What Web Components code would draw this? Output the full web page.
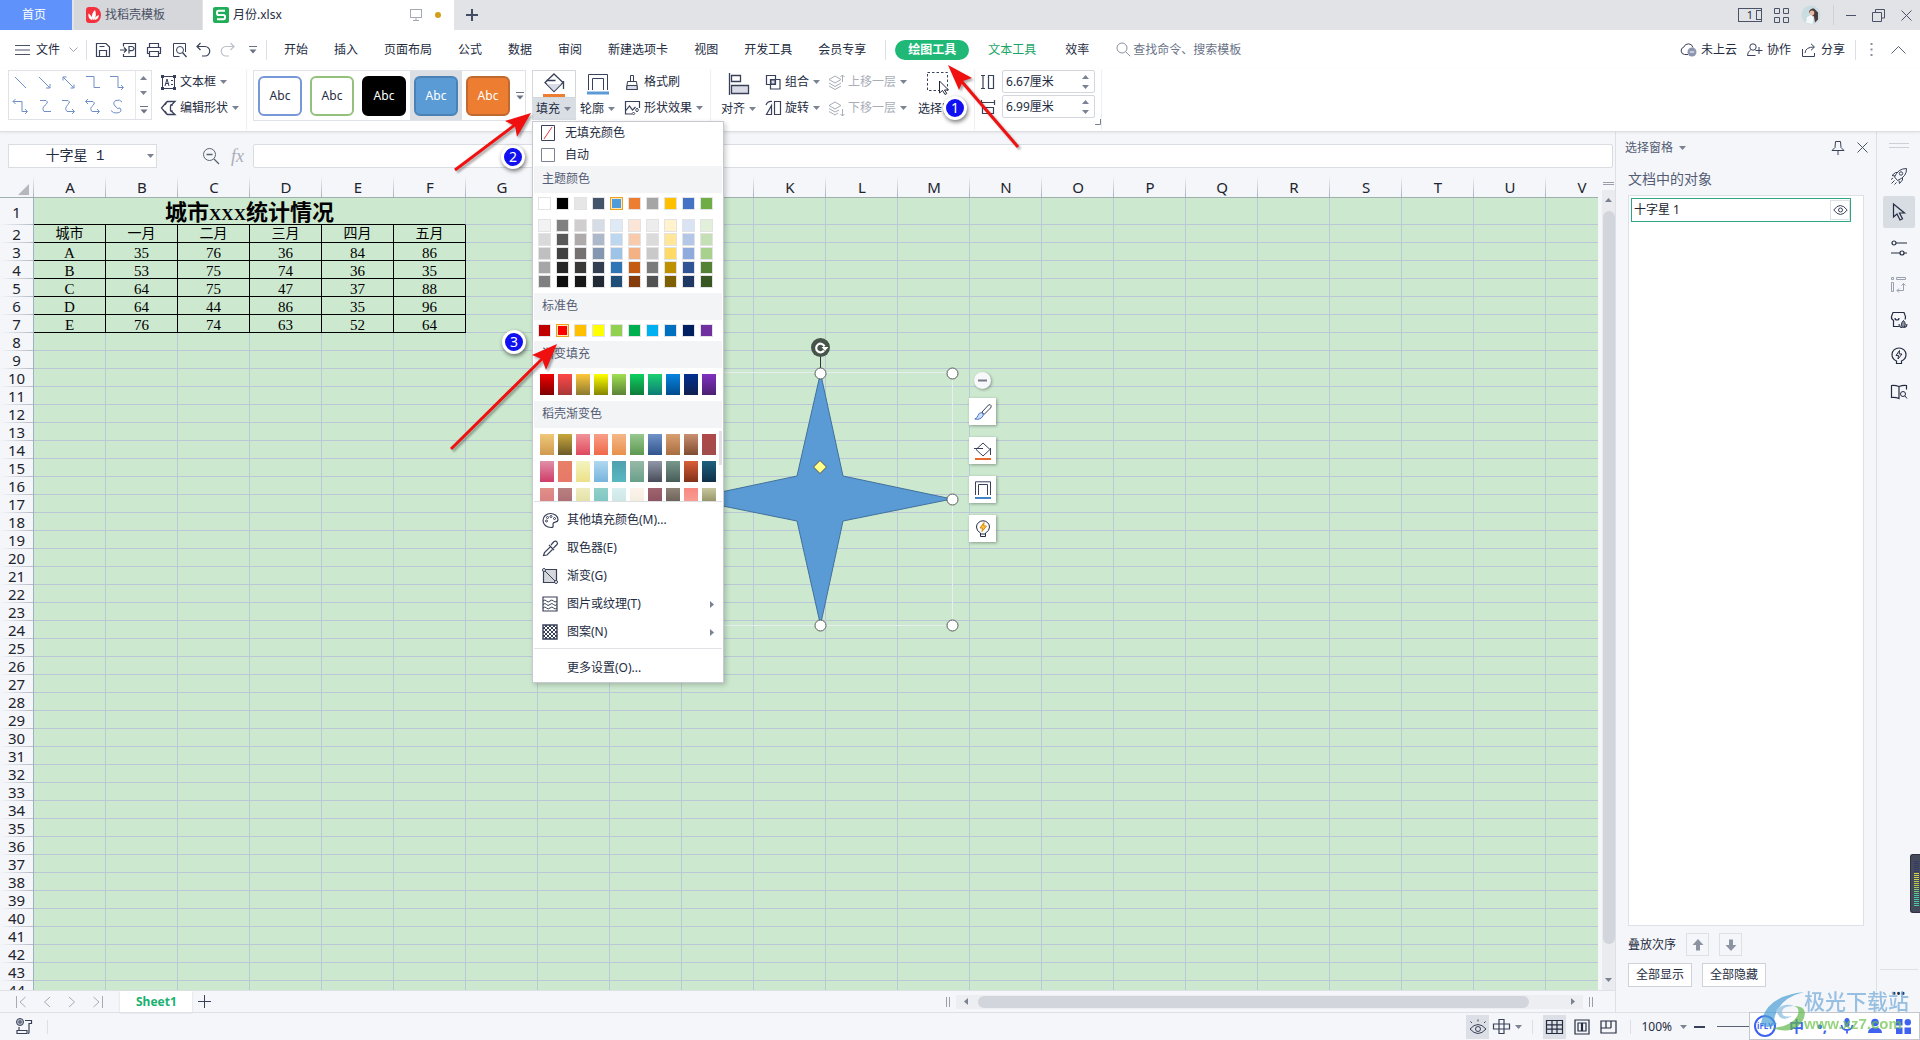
<!DOCTYPE html>
<html lang="zh-CN">
<head>
<meta charset="utf-8">
<title>月份.xlsx</title>
<style>
html,body{height:100%}
body{margin:0;overflow:hidden;font:12px/16px "Noto Sans","Noto Sans CJK SC",sans-serif;color:#242c42;background:#f5f6f9}
</style>
</head>
<body>
<wps-app></wps-app>
<script>
const BASE = `
*{box-sizing:border-box}
button{font:inherit;color:inherit;background:none;border:0;padding:0;margin:0;display:inline-flex;align-items:center;white-space:nowrap}
input{font:inherit;color:inherit;margin:0;outline:0}
a{color:inherit;text-decoration:none}
.sep{width:1px;background:#dcdfe4;flex:none}
.grow{flex:1}
`;
function define(tag, css, html, setup) {
  const tpl = document.createElement('template');
  customElements.define(tag, class extends HTMLElement {
    connectedCallback() {
      if (this.shadowRoot) return;
      const root = this.attachShadow({mode: 'open'});
      tpl.innerHTML = '<style>' + BASE + css + '</style>' + (typeof html === 'function' ? html(this) : html);
      root.append(tpl.content.cloneNode(true));
      if (setup) setup(this, root);
    }
  });
}
const DARK = 'stroke="#39415a"';
/* name: [width, height, markup] */
const ICONS = {
  caret: [7,4,'<path d="M0 0h7L3.500 4z" fill="#7b8292" stroke="none"/>'],
  caretup: [7,4,'<path d="M0 4h7L3.500 0z" fill="#7b8292" stroke="none"/>'],
  caretright: [4,7,'<path d="M0 0v7L4 3.500z" fill="#7b8292" stroke="none"/>'],
  caretleft: [4,7,'<path d="M4 0v7L0 3.500z" fill="#7b8292" stroke="none"/>'],
  more: [8,8,'<path d="M0 .5h8" stroke="#6b7283"/><path d="M0.500 3.500h7L4 7.500z" fill="#6b7283" stroke="none"/>'],
  docer: [15,16,'<path d="M0 3Q0 0 3 0h5a7 8 0 0 1 0 16H3Q0 16 0 13z" fill="#f5313d" stroke="none"/><path d="M7.500 13C5 11 5.500 6 9 3c1.500 4 1 8-1.500 10zM6.500 13C3 12.500 2 9.500 2.500 6.500 5 8 6.500 10 6.500 13zM8.500 13c3.500-.5 4.500-3 4.300-5-2.300.8-3.800 2.500-4.300 5z" fill="#fff" stroke="none"/>'],
  xls: [16,16,'<rect width="16" height="16" rx="2" fill="#1fae57" stroke="none"/><path d="M12 3.800H5.500Q4 3.800 4 5.300v.9Q4 8 5.500 8h5Q12 8 12 9.600v1Q12 12.200 10.500 12.200H4" stroke="#fff" stroke-width="2"/>'],
  monitor: [14,14,'<rect x="1.500" y="1.500" width="11" height="8" stroke="#a5a9b3"/><path d="M7 9.500v3M4 12.500h6" stroke="#a5a9b3"/>'],
  plus: [12,12,'<path d="M6 0v12M0 6h12" stroke="#444c63" stroke-width="2"/>'],
  plusthin: [13,13,'<path d="M6.500 0v13M0 6.500h13" stroke="#39415a"/>'],
  grid4: [15,15,'<path d="M.5.5h5v5h-5zM9.500.5h5v5h-5zM.5 9.500h5v5h-5zM9.500 9.500h5v5h-5z" stroke="#4a5268"/>'],
  avatar: [20,20,'<circle cx="10" cy="10" r="9.500" fill="#c9dcdf" stroke="none"/><path d="M8 7q1-4 5-3.500l4 4v7l-3 3-1-6-3-2z" fill="#4a3a3c" stroke="none"/><circle cx="11" cy="8" r="2.400" fill="#e9b9a2" stroke="none"/><path d="M5 18l1-6 4-2 2.500 3-1 6z" fill="#f3f7fa" stroke="none"/>'],
  min: [10,10,'<path d="M0 5.500h10" stroke="#4a5268"/>'],
  restore: [13,13,'<path d="M3.500 3.500v-3h9v8.500h-3M.5 3.500h9v9h-9z" stroke="#4a5268"/>'],
  close: [11,11,'<path d="M.5.5l10 10M10.500.5l-10 10" stroke="#4a5268"/>'],
  burger: [15,12,'<path d="M0 1.500h15M0 6h15M0 10.500h15" stroke="#4a5268"/>'],
  chevdown: [9,6,'<path d="M.5.5l4 4 4-4" stroke="#a0a5b1"/>'],
  chevup: [15,8,'<path d="M.5 7.500l7-7 7 7" stroke="#5a6276"/>'],
  save: [16,16,'<path d="M1.500 1.500h9.500l3.500 3.500v9.500h-13zM4.500 14.500V8.500h7v6M4.500 4.500h5" '+DARK+' stroke-width="1.200"/>'],
  export: [17,16,'<path d="M3.500 4.500V1.500h12v13h-12V12M0 8h6M4 5.500L6.500 8 4 10.500M9 11.500V4.500h3q2 .5 2 2t-2 2.200H9" '+DARK+' stroke-width="1.200"/>'],
  print: [16,16,'<path d="M3.500 5.500v-4h9v4M3.500 11.500h-2v-6h13v6h-2M3.500 9.500h9v5h-9z" '+DARK+' stroke-width="1.200"/>'],
  preview: [16,16,'<path d="M14.500 10V1.500h-12v13h6" '+DARK+'/><circle cx="9" cy="8" r="3.500" '+DARK+'/><path d="M11.500 10.500l4 4.500" '+DARK+' stroke-width="1.300"/>'],
  undo: [15,16,'<path d="M1.500 4.500H9a4.500 4.500 0 0 1 0 9.500H6M4.500 1L1 4.500 4.500 8" '+DARK+' stroke-width="1.200"/>'],
  redo: [15,16,'<path d="M13.500 4.500H6A4.500 4.500 0 0 0 6 14h3M10.500 1L14 4.500 10.500 8" stroke="#bcc0c9" stroke-width="1.200"/>'],
  search: [15,15,'<circle cx="6" cy="6" r="5" stroke="#8a90a0"/><path d="M9.700 9.700l4.500 4.500" stroke="#8a90a0"/>'],
  cloud: [17,15,'<path d="M8 12.500H4.500a3.800 3.800 0 0 1-.7-7.400A4.800 4.800 0 0 1 13 5.500" '+DARK+'/><circle cx="12" cy="10" r="4.500" fill="#8d95b0" stroke="none"/><path d="M9.800 10h4.400" stroke="#fff"/>'],
  coop: [16,14,'<circle cx="6" cy="4" r="3.200" '+DARK+'/><path d="M3.500 7.200Q.5 8.500.5 12.500h8M12 4v7M8.500 7.500H15.500" '+DARK+'/>'],
  share: [16,14,'<path d="M1.500 6v7.500h12V10M4 10q.5-6 9-6M10 .8L13.500 4 10 7.300" '+DARK+'/>'],
  dots: [3,13,'<path d="M.5 0h2v2h-2zM.5 5.500h2v2h-2zM.5 11h2v2h-2z" fill="#8a90a0" stroke="none"/>'],
  textbox: [17,17,'<path d="M2.500 2.500h12v12h-12z" '+DARK+'/><path d="M1 1h3v3H1zM13 1h3v3h-3zM1 13h3v3H1zM13 13h3v3h-3z" fill="#39415a" stroke="none"/><path d="M5 12l2-7 2 7M5.500 9.500h3M11 6.500h2M11 10.500h2" '+DARK+'/>'],
  editshape: [17,16,'<path d="M7 1.500L1.500 8 7 14.500M7 1.500h8L10.500 6v4.500l4.500 4H7M5 5l2-3M5 11l2 3" '+DARK+' stroke-width="1.300"/><path d="M10 5h3M10 11h3" '+DARK+'/>'],
  bucket: [24,22,'<path d="M12 2l9 8.500-9 9-9-9z" fill="#fff" '+DARK+' stroke-width="1.300"/><path d="M5 12h14l-7 7z" fill="#d9dbe6" stroke="none"/><path d="M4.500 8.500h9M21.500 9v8" '+DARK+' stroke-width="1.300"/>'],
  outline: [22,22,'<path d="M1.500 17V1.500h19V17M5.500 17V5.500h11V17" '+DARK+' stroke-width="1"/><path d="M0 20h22" stroke="#5b9bd5" stroke-width="3"/>'],
  brush: [16,17,'<path d="M6.500 1.500h3v6h-3zM3.500 7.500h9l1 8h-11z" fill="#fff" '+DARK+'/><path d="M3 11.500h10l.3 4H2.700z" fill="#d9dbe6" '+DARK+'/>'],
  effect: [17,16,'<path d="M8 14H1.500V1.500h14V8M1.500 11l4-5 3 4 3-3" '+DARK+' stroke-width="1.200"/><path d="M13 8l1.500 2L13 12l-1.500-2zM9.500 12l1.300 1.500-1.300 1.500L8.200 13.500z" '+DARK+'/>'],
  align: [22,22,'<path d="M1.500 0v22" '+DARK+' stroke-width="1.300"/><path d="M3.500 2.500h9v6h-9z" '+DARK+' stroke-width="1.300"/><path d="M3.500 12.500h17v8h-17z" fill="#d9dbe6" '+DARK+' stroke-width="1.300"/>'],
  group: [17,17,'<path d="M1.500 1.500h9v9h-9z" fill="none" '+DARK+' stroke-width="1.200"/><path d="M5.500 5.500h9.500v9.500H5.500z" '+DARK+' stroke-width="1.200"/><path d="M6 6h4v4H6z" fill="#d9dbe6" '+DARK+'/>'],
  rotate: [17,16,'<path d="M9.500 1.500h6v13h-6zM6.500 14.500h-5l5-9zM1 5q1.500-4 6-3.500" '+DARK+' stroke-width="1.200"/>'],
  layerup: [17,17,'<path d="M7 2l6 3.500-6 3.500-6-3.500zM1 9l6 3.500L13 9M1 12l6 3.500 6-3.500M14.500 8V1M12.500 3l2-2 2 2" stroke="#a9adb7"/>'],
  layerdown: [17,17,'<path d="M7 2l6 3.500-6 3.500-6-3.500zM1 8.500L7 12l4-2M1 11.500L7 15l3-2M14.500 9v7M12.500 14l2 2 2-2" stroke="#a9adb7"/>'],
  selpane: [26,24,'<path d="M.5.5h20v18H.5z" '+DARK+' stroke-dasharray="2.500 2"/><path d="M12.500 9v12l3-2.500 2.500 4 1.800-1L17.500 18h4z" fill="#fff" stroke="#20273a"/>'],
  hsize: [14,16,'<path d="M0 1.500h4M0 14.500h4M2 1.500v13M7.500 1.500h5v13h-5z" '+DARK+' stroke-width="1.200"/>'],
  wsize: [14,16,'<path d="M.5 1v5M13.500 1v5M.5 3.500h13M1.500 8.500h11v6h-11z" '+DARK+' stroke-width="1.200"/>'],
  launcher: [6,6,'<path d="M5.500 0v5.500H0" stroke="#7b8292"/>'],
  zoomout: [18,18,'<circle cx="7.500" cy="7.500" r="6" stroke="#5a6276"/><path d="M12 12l5 5M4.500 7.500h6" stroke="#5a6276" stroke-width="1.300"/>'],
  pin: [14,14,'<path d="M4.500.5h5l.5 6 3 3H1l3-3zM7 9.500V14" '+DARK+'/>'],
  eye: [15,12,'<path d="M.8 6q6.200-9 13.400 0-6.700 9-13.400 0z" '+DARK+'/><circle cx="7.500" cy="6" r="2" '+DARK+'/>'],
  rocket: [18,18,'<path d="M16.500 1.500q.5 8-9 12l-3-3.500q3.500-8.500 12-8.500zM5 9L2 8.500l3.500-3H8M9 13.500l.5 3 3-3.500V10M1 12.500l2-1.500M1.500 16.500l3-3M4.500 17.500l2-2" '+DARK+'/><circle cx="11" cy="6.500" r="1.700" '+DARK+'/>'],
  arrow: [14,18,'<path d="M1.500 1v13l3.500-3 3 6 2.500-1.300-3-5.700h5z" stroke="#242c42" stroke-width="1.200"/>'],
  sliders: [18,16,'<circle cx="4" cy="3" r="2" stroke="#242c42" stroke-width="1.200"/><path d="M6 3h11M1 13h9M14 13h3" stroke="#242c42" stroke-width="1.200"/><circle cx="12" cy="13" r="2" stroke="#242c42" stroke-width="1.200"/>'],
  frames: [17,17,'<path d="M1.500 1.500h2v2h-2zM6.500 1.500h9v2h-9zM1.500 6.500h2v9h-2zM7 14.500h6.500v-7M9 12.500l-2 2 2 2M11.500 9.500l2-2 2 2" stroke="#9aa0ad"/>'],
  docerlib: [18,18,'<path d="M9 15.500H3.500V9M3.500 9Q1 8.500 1.500 5.500l1.500-4h11l1.500 4q0 2-.5 3M5 7q0 2 2 2t2-2" stroke="#242c42" stroke-width="1.200"/><path d="M13 16.500q-3.500-3 .5-7 3.500 4 0 7zM12.500 16.500q-3.500.5-3.500-3.500M14 16.500q3.500 0 3-3.500" fill="#8a90a0" stroke="#242c42"/>'],
  bulb: [16,18,'<path d="M5.500 14q-4.500-2-4.500-6.500a7 6.500 0 0 1 14 0q0 4.500-4.500 6.500v2.500h-5z" stroke="#242c42" stroke-width="1.200"/><path d="M8.500 3.500l-3.500 5h2.500L7 12l4-5H8.200z" stroke="#242c42"/>'],
  book: [18,16,'<path d="M9 2.500Q5 1 1.500 1.500v12q4-.5 7.500 1zM9 2.500Q13 1 16.500 1.500v4M9 2.500v12" stroke="#242c42" stroke-width="1.200"/><circle cx="13" cy="10" r="2.500" stroke="#242c42"/><path d="M15 12l2 2.500" stroke="#242c42"/>'],
  up: [12,12,'<path d="M6 0l5.500 6H8v5.500H4V6H.5z" fill="#8d93a1" stroke="none"/>'],
  down: [12,12,'<path d="M6 12L.5 6H4V.5h4V6h3.500z" fill="#8d93a1" stroke="none"/>'],
  first: [10,12,'<path d="M.5 0v12M9.500 1L4 6l5.500 5" stroke="#a5aab5"/>'],
  prev: [8,12,'<path d="M7 1L1.500 6 7 11" stroke="#a5aab5"/>'],
  next: [8,12,'<path d="M1 1l5.500 5L1 11" stroke="#a5aab5"/>'],
  last: [10,12,'<path d="M9.500 0v12M.5 1L6 6l-5.500 5" stroke="#a5aab5"/>'],
  script: [18,17,'<circle cx="5" cy="4" r="3.500" '+DARK+' fill="#b7bcc8"/><circle cx="5" cy="4" r="1.200" '+DARK+'/><path d="M10 2.500h6.500v3H14v9q0 1-1 1M4 9v3M2 12.500h10v3H2z" '+DARK+' stroke-width="1.200"/>'],
  eyeon: [18,16,'<path d="M1 10q8-9 16 0-8 9-16 0zM3 4L1.500 2.500M9 2.500V.5M15 4l1.500-1.500" stroke="#39415a"/><circle cx="9" cy="10" r="2.500" '+DARK+'/>'],
  cross: [17,15,'<path d="M6 .5h5v14H6zM.5 5h16v5H.5z" '+DARK+' stroke-width="1.200"/>'],
  table: [17,14,'<path d="M.5.5h16v13H.5zM.5 4.800h16M.5 9.200h16M6 .5v13M11 .5v13" stroke="#242c42" stroke-width="1.200"/>'],
  page: [16,16,'<path d="M1 1h14v14H1zM4 4h3.500v8H4zM8.500 4H12v8H8.500z" stroke="#242c42" stroke-width="1.200"/>'],
  split: [17,14,'<path d="M1 1h15v12H1zM6 1v7M11 1v7M1 8h10" stroke="#242c42" stroke-width="1.200"/>'],
  minus: [11,4,'<path d="M0 2h11" stroke="#39415a" stroke-width="2"/>'],
  nofill: [14,16,'<path d="M.5.5h13v15H.5z" fill="#fff" '+DARK+'/><path d="M3 14L11 2" stroke="#e03a3a"/>'],
  box: [14,14,'<path d="M.5.5h13v13H.5z" fill="#fff" stroke="#7b8292"/>'],
  palette: [17,17,'<path d="M8.500 1.500c4 0 7.500 2.500 7.500 6 0 4-5 1.500-5 4.500 0 2 1 3.500-2 3.500C4.500 15.500 1 12.500 1 8.500s3.500-7 7.500-7z" '+DARK+' stroke-width="1.200"/><g '+DARK+'><circle cx="4.500" cy="9" r="1"/><circle cx="5.500" cy="5.500" r="1"/><circle cx="9" cy="4.500" r="1"/><circle cx="12.500" cy="6.500" r="1"/></g>'],
  dropper: [17,17,'<path d="M1.500 15.500l1-3 6-6 2.500 2.500-6 6zM7 5l5 5M9 5l3-3.500q2-1 3 .5t0 2.500L11.500 8" '+DARK+' stroke-width="1.200"/>'],
  gradient: [16,16,'<path d="M1.500 1.500h13v13h-13z" fill="#d5d7dc" '+DARK+' stroke-width="1.200"/><path d="M2 2l12 12" '+DARK+'/><circle cx="2" cy="2" r="1.500" fill="#fff" '+DARK+'/><circle cx="14" cy="14" r="1.500" fill="#fff" '+DARK+'/>'],
  texture: [16,16,'<path d="M1 1h14v14H1z" '+DARK+' stroke-width="1.200"/><path d="M1 5q2-2 3.500 0t3.500 0 3.500 0 3.500 0M1 8.500q2-2 3.500 0t3.500 0 3.500 0 3.500 0M1 12q2-2 3.500 0t3.500 0 3.500 0 3.500 0" '+DARK+'/>'],
  pattern: [16,16,'<path d="M1 1h14v14H1z" '+DARK+' stroke-width="1.400"/><path d="M1 5l4-4M1 9l8-8M1 13L13 1M3 15L15 3M7 15l8-8M11 15l4-4M11 1l4 4M7 1l8 8M3 1l12 12M1 3l12 12M1 7l8 8M1 11l4 4" '+DARK+'/>'],
  paint: [18,18,'<path d="M8 9l6.500-7q2-1 2.500.5t-.5 2.500L10 11.500z" '+DARK+'/><path d="M7.500 9.500q-3 .5-3.500 3T.8 16q6 1.500 8.700-4z" fill="#cfe0fa" stroke="#4a74c9"/>'],
  bucket2: [18,18,'<path d="M9 1l7 6.500L9 14 2 7.500zM0 6.500h9M16.500 6v7" '+DARK+'/><path d="M1 17h16" stroke="#e8692c" stroke-width="2"/>'],
  outline2: [18,18,'<path d="M1.500 14V.8h15V14M4.500 14V3.500h9V14" '+DARK+'/><path d="M1 17h16" stroke="#3f83c9" stroke-width="2"/>'],
  idea: [16,18,'<path d="M5.500 13q-4-2-4-6a6.500 6.200 0 0 1 13 0q0 4-4 6v3.500h-5zM5.500 14h5" stroke="#242c42"/><path d="M9 2.500L5 8h2.500L7 11.500 11.500 6H8.700z" fill="#ffc53a" stroke="#d98a15"/>'],
  mic: [14,16,'<rect x="4.500" y="0" width="5" height="9" rx="2.500" fill="#3f63f0" stroke="none"/><path d="M1.500 7q.5 5 5.500 5t5.500-5M7 12v3.500" stroke="#3f63f0" stroke-width="1.800"/>'],
  person: [16,16,'<circle cx="8" cy="4.500" r="3.800" fill="#3f63f0" stroke="none"/><path d="M1 15q0-5.500 7-5.500t7 5.500z" fill="#3f63f0" stroke="none"/>'],
  apps: [15,15,'<path d="M0 0h6.500v6.500H0zM0 8.500h6.500V15H0zM8.500 8.500H15V15H8.500z" fill="#3f63f0" stroke="none"/><circle cx="11.800" cy="3.200" r="3.200" fill="#3f63f0" stroke="none"/>'],
};
const LINES = ['M3 3l11 11','M3 3l11 11M14 10v4h-4','M3 3l11 11M14 10.500V14h-3.500M3 6.500V3h3.500','M2 2.500h8v11h6','M2 2.500h8v11h5M13 11l2.500 2.500L13 16',
  'M1 3.500h9v10h5M3.500 1L1 3.500 3.500 6M13 11l2.500 2.500L13 16','M4 2.500h6q3 1 0 4-5 3.500-2 7h7','M2 2.500h6q3 1 0 4-4 4-1 7h7M12 11l2.500 2.500L12 16','M2 3.500h7q3 1 0 4-4 3-1 6h7M4 1L1.500 3.500 4 6M13 11l2.500 2.500L13 16','M14 4q-2-3-6-1.500T7 8t5 2q3 4-3 5-4 .5-6-2.500'];
LINES.forEach((d, i) => ICONS['line' + i] = [18, 18, '<path d="' + d + '" stroke="#6f8fc6"/>']);

define('wps-icon', ':host{display:inline-flex;flex:none}svg{display:block;fill:none;overflow:visible}', el => {
  const [w, h, body] = ICONS[el.getAttribute('name')];
  return `<svg width="${w}" height="${h}" viewBox="0 0 ${w} ${h}" aria-hidden="true">${body}</svg>`;
});
const ic = n => `<wps-icon name="${n}"></wps-icon>`;

/* ---------- title bar ---------- */
define('wps-titlebar', `
:host{display:flex;height:30px;background:#e1e3e7}
.tab{height:30px;display:flex;align-items:center;font-size:12px}
.home{width:72px;padding-left:22px;background:#5f92fb;color:#fff}
.docer{width:128px;margin-left:2px;padding-left:12px;gap:4px;background:#d5d7da;color:#4a5064}
.file{width:251px;margin-left:1px;padding:0 13px 0 10px;gap:4px;background:#fff;color:#242c42}
.dot{width:6px;height:6px;border-radius:3px;background:#d39e1c;margin:0 0 0 8px}
.add{width:36px;justify-content:center}
.right{display:flex;align-items:center;gap:12px;padding-right:8px}
.box{width:24px;height:14px;border:1px solid #4a5268;justify-content:flex-end;gap:3px;font-size:11px;line-height:12px}
.box i{width:5px;height:10px;border:1px solid #4a5268;border-right:0}
.right .sep{height:20px;background:#cdd0d6}
.win{gap:16px;display:flex;align-items:center}
`, `
<button class="tab home">首页</button>
<button class="tab docer">${ic('docer')}找稻壳模板</button>
<button class="tab file">${ic('xls')}月份.xlsx<span class="grow"></span>${ic('monitor')}<span class="dot"></span></button>
<button class="add">${ic('plus')}</button>
<span class="grow"></span>
<div class="right"><button class="box">1<i></i></button><button>${ic('grid4')}</button><button>${ic('avatar')}</button><span class="sep"></span>
<div class="win"><button>${ic('min')}</button><button>${ic('restore')}</button><button>${ic('close')}</button></div></div>`);

/* ---------- menu row ---------- */
define('wps-menubar', `
:host{display:flex;height:39px;align-items:center;background:#fff;padding:0 14px 0 15px}
.sep{height:20px}
.file{gap:6px;margin-right:8px}
.file wps-icon:last-child{margin-left:3px}
.quick{display:flex;gap:9px;align-items:center;padding:0 9px 0 8px}
.quick button:last-child{margin-left:5px}
nav{display:flex;align-items:center;padding-left:4px}
nav a{padding:2px 13px}
nav .sep{margin:0 9px 0 6px}
nav a.on{background:#20b877;color:#fff;border-radius:10px;font-weight:700;margin-right:6px}
nav a.green{color:#1aa566}
nav a.eff{padding:2px 16px}
.search{display:flex;align-items:center;gap:2px;padding-left:11px;color:#6a7387}
.search input{border:0;padding:0;width:130px;background:none}
.search input::placeholder{color:#6a7387;opacity:1}
.right{display:flex;align-items:center;gap:10px}
.right button{gap:4px}
.right .dots{margin:0 8px 0 4px}
`, `
<button class="file">${ic('burger')}文件 ${ic('chevdown')}</button><span class="sep"></span>
<div class="quick">${['save','export','print','preview','undo','redo','more'].map(n => `<button>${ic(n)}</button>`).join('')}</div><span class="sep"></span>
<nav>${['开始','插入','页面布局','公式','数据','审阅','新建选项卡','视图','开发工具','会员专享'].map(t => `<a href="#">${t}</a>`).join('')}<span class="sep"></span>
<a href="#" class="on">绘图工具</a><a href="#" class="green">文本工具</a><a href="#" class="eff">效率</a></nav>
<label class="search">${ic('search')}<input type="text" placeholder="查找命令、搜索模板"></label>
<span class="grow"></span>
<div class="right"><button>${ic('cloud')}未上云</button><button>${ic('coop')}协作</button><button>${ic('share')}分享</button><span class="sep"></span><button class="dots">${ic('dots')}</button><button>${ic('chevup')}</button></div>`);

/* ---------- ribbon ---------- */
define('wps-big-button', `
:host{display:block;width:44px;height:50px}
button{display:flex;flex-direction:column;width:100%;height:100%}
.pic{width:100%;height:28px;display:flex;flex-direction:column;align-items:center;justify-content:center;border:1px solid transparent}
.cap{width:100%;height:22px;display:flex;align-items:center;gap:4px;padding-left:4px}
:host([active]) .pic{background:#fff;border-color:#d3d7dd}
:host([active]) .cap{background:#d9dee5}
:host([wide]){width:60px}
:host([wide]) .pic{padding-right:8px}
`, el => `<button><span class="pic"><slot></slot></span><span class="cap">${el.getAttribute('label')}${el.hasAttribute('wide') ? '' : ic('caret')}</span></button>`);

define('wps-small-button', `
:host{display:flex;height:24px}
:host([disabled]){color:#a9adb7}
button{gap:4px}
.i{width:16px;display:flex;justify-content:center}
`, el => `<button><span class="i">${ic(el.getAttribute('icon'))}</span>${el.getAttribute('label')}${el.hasAttribute('plain') ? '' : ic('caret')}</button>`);

define('wps-size-input', `
:host{display:block;height:23px}
label{display:flex;align-items:center;gap:7px}
.f{display:flex;align-items:center;width:93px;height:23px;border:1px solid #d3d6dc;border-radius:2px;padding:0 5px 0 3px}
input{border:0;padding:0;width:72px;background:none}
.sp{display:flex;flex-direction:column;gap:6px;margin-left:auto}
`, el => `<label>${ic(el.getAttribute('icon'))}<span class="f"><input type="text" value="${el.getAttribute('value')}"><span class="sp">${ic('caretup')}${ic('caret')}</span></span></label>`);

define('wps-ribbon', `
:host{display:flex;height:63px;background:#fff;padding:1px 8px 0;border-bottom:1px solid #dcdee2;box-shadow:0 1px 3px #0001;position:relative;z-index:3}
.lines{display:flex;width:144px;height:50px;border:1px solid #dfe2e7}
.cells{display:grid;grid-template-columns:repeat(5,24px);grid-template-rows:24px 24px;width:127px;border-right:1px solid #e6e8ec}
.cells button{justify-content:center}
.scroll{flex:1;display:flex;flex-direction:column;align-items:center;justify-content:space-around}
.col{display:grid;grid-template-rows:24px 24px;row-gap:2px;align-content:start;margin-left:4px}
.c1{margin-left:8px;width:86px}
.sep{height:60px;background:#eceef1;margin:0 6px 0 0}
.sep.b{margin:0 6px 0 7px}
.styles{display:flex;width:273px;height:51px;border:1px solid #dfe2e7;margin-right:6px;align-items:stretch}
.styles .cell{width:52px;display:flex;align-items:center;justify-content:center}
.cell.sel{background:#dbdfe4}
.cell button{width:44px;height:40px;border-radius:6px;border:2px solid;justify-content:center;font-size:12px}
.styles .m{flex:1;justify-content:center}
.drop{position:relative}
.drop wps-fill-menu{position:absolute;left:0;top:51px}
.bar{width:22px;height:3px;background:#ed7d31}
.sizes{display:grid;row-gap:2px;align-content:start}
.launch{display:flex;align-items:flex-end;padding-bottom:6px}
`, `
<div class="lines"><div class="cells">${LINES.map((_, i) => `<button>${ic('line' + i)}</button>`).join('')}</div><div class="scroll">${ic('caretup')}${ic('caret')}${ic('more')}</div></div>
<div class="col c1"><wps-small-button icon="textbox" label="文本框"></wps-small-button><wps-small-button icon="editshape" label="编辑形状"></wps-small-button></div>
<span class="sep"></span>
<div class="styles">
<span class="cell"><button style="border-color:#7897d6">Abc</button></span><span class="cell"><button style="border-color:#93c07a">Abc</button></span><span class="cell"><button style="background:#000;color:#fff;border-color:#000">Abc</button></span><span class="cell sel"><button style="background:#5b9bd5;color:#fff;border-color:#4a82b6">Abc</button></span><span class="cell"><button style="background:#ed7d31;color:#fff;border-color:#bf6a31">Abc</button></span><button class="m">${ic('more')}</button></div>
<div class="drop"><wps-big-button label="填充" active>${ic('bucket')}<span class="bar"></span></wps-big-button><wps-fill-menu></wps-fill-menu></div>
<wps-big-button label="轮廓">${ic('outline')}</wps-big-button>
<div class="col"><wps-small-button icon="brush" label="格式刷" plain></wps-small-button><wps-small-button icon="effect" label="形状效果"></wps-small-button></div>
<span class="sep b"></span>
<wps-big-button label="对齐">${ic('align')}</wps-big-button>
<div class="col"><wps-small-button icon="group" label="组合"></wps-small-button><wps-small-button icon="rotate" label="旋转"></wps-small-button></div>
<div class="col c1"><wps-small-button icon="layerup" label="上移一层" disabled></wps-small-button><wps-small-button icon="layerdown" label="下移一层" disabled></wps-small-button></div>
<wps-big-button wide label="选择窗格">${ic('selpane')}</wps-big-button>
<span class="sep"></span>
<div class="sizes"><wps-size-input icon="hsize" value="6.67厘米"></wps-size-input><wps-size-input icon="wsize" value="6.99厘米"></wps-size-input></div>
<div class="launch">${ic('launcher')}</div><span class="sep"></span>`);

/* ---------- fill menu ---------- */
const THEME = ['#ffffff','#000000','#e7e6e6','#44546a','#4f9bdc','#ed7d31','#a5a5a5','#ffc000','#4472c4','#70ad47'];
const SHADES = [
 ['#f2f2f2','#808080','#d0cece','#d6dce5','#deebf7','#fbe5d6','#ededed','#fff2cc','#dae3f3','#e2f0d9'],
 ['#d9d9d9','#595959','#afabab','#adb9ca','#bdd7ee','#f8cbad','#dbdbdb','#ffe699','#b4c7e7','#c5e0b4'],
 ['#bfbfbf','#404040','#767171','#8497b0','#9dc3e6','#f4b183','#c9c9c9','#ffd966','#8faadc','#a9d18e'],
 ['#a6a6a6','#262626','#3b3838','#333f50','#2e75b6','#c55a11','#7b7b7b','#bf9000','#2f5597','#548235'],
 ['#7f7f7f','#0d0d0d','#181717','#222a35','#1f4e79','#843c0c','#525252','#7f6000','#203864','#385723']];
const STD = ['#c00000','#ff0000','#ffc000','#ffff00','#92d050','#00b050','#00b0f0','#0070c0','#002060','#7030a0'];
const GRAD = ['#f00000,#7d0000','#ff4848,#a83838','#ffc83c,#8c7a30','#ffff00,#858500','#a0e050,#5c8238','#0cd060,#107a3c','#1cd070,#0c7c78','#0884e0,#004c8c','#003090,#102050','#8030c0,#4c2070'];
const DOCER = [
 ['#f0c878,#cf9a50','#c8a83c,#6c5a28','#f0949a,#e0485c','#f8a088,#f06848','#f4b888,#e8904c','#98c890,#5c9850','#7094c8,#30548c','#d8a070,#a86c40','#c89070,#804c30','#b04848,#a04c4c'],
 ['#e090a8,#d03c68','#e88068,#e87868','#f4f4c0,#ece088','#b0d8f0,#78b4dc','#50a0b0,#58b8c0','#98b8a8,#68a088','#9098a8,#484c58','#78988c,#485c58','#d86038,#803018','#206080,#103048'],
 ['#e09088,#d87880','#b88080,#a86870','#f0ecc0,#dcdc98','#90d0c8,#78c0c0','#d8f0f0,#c8e0e0','#fcf4ec,#f0e8d8','#a06470,#804c58','#908478,#585048','#f88880,#f8a8a0','#c8c8a0,#787848']];
const sw = (list, sel = -1) => list.map((c, i) => `<button class="s${i === sel ? ' on' : ''}" aria-label="${c}" style="background:${c}"></button>`).join('');
const gr = list => list.map(c => `<button class="g" aria-label="${c}" style="background:linear-gradient(${c})"></button>`).join('');
define('wps-fill-menu', `
:host{display:block;width:192px;height:562px;background:#fff;border:1px solid #c6c9cf;box-shadow:2px 2px 5px #0003;padding:0 1px}
.top{display:flex;width:100%;height:22px;padding-left:7px;gap:10px}
.top:first-child{height:24px}
h4{margin:0;height:27px;line-height:26px;padding-left:8px;background:#f3f4f6;font-weight:400;color:#535c74}
.row{display:flex;gap:5px;padding:4px 0 0 4px}
.row.b{gap:4px;padding:6px 0 0 6px}
.s{width:13px;height:13px;border:1px solid #e3e3e6}
.shades{padding:9px 0 5px 4px;display:grid;grid-template-columns:repeat(10,13px);column-gap:5px;row-gap:1px}
.s.on{border-color:#f0a020;box-shadow:inset 0 0 0 1px #ffe9b8}
.g{width:14px;height:21px}
.std{padding-bottom:4px}
.gap{padding-bottom:6px!important}
.docer{display:flex;justify-content:space-between;height:74px;overflow:hidden;border-bottom:1px solid #dcdee2}
.thumb{width:3px;height:34px;margin-top:3px;background:#dfe1e5}
.item{display:flex;width:100%;height:28px;padding:0 8px;gap:9px}
.item .i{width:16px;display:flex;justify-content:center}
.item .grow{text-align:left}
.list{padding:4px 0 2px;border-bottom:1px solid #e0e2e6}
.list+.item{height:38px}
`, `
<button class="top">${ic('nofill')}无填充颜色</button><button class="top">${ic('box')}自动</button>
<h4>主题颜色</h4><div class="row">${sw(THEME, 4)}</div><div class="shades">${SHADES.map(r => sw(r)).join('')}</div>
<h4>标准色</h4><div class="row std">${sw(STD, 1)}</div>
<h4>渐变填充</h4><div class="row b gap">${gr(GRAD)}</div>
<h4>稻壳渐变色</h4><div class="docer"><div>${DOCER.map(r => `<div class="row b">${gr(r)}</div>`).join('')}</div><span class="thumb"></span></div>
<div class="list">${[['palette','其他填充颜色(M)...'],['dropper','取色器(E)'],['gradient','渐变(G)'],['texture','图片或纹理(T)',1],['pattern','图案(N)',1]].map(([n, t, s]) => `<button class="item"><span class="i">${ic(n)}</span><span class="grow">${t}</span>${s ? ic('caretright') : ''}</button>`).join('')}</div>
<button class="item"><span class="i"></span><span class="grow">更多设置(O)...</span></button>`);

/* ---------- formula bar ---------- */
define('wps-formula-bar', `
:host{display:flex;height:44px;padding:12px 2px 0 8px;align-items:flex-start}
.name{display:flex;align-items:center;width:149px;height:24px;border:1px solid #d9dce1;background:#fff;padding-right:2px;font-size:14px}
.name input{flex:1;width:0;border:0;padding:0 6px 0 0;background:none;text-align:center;font-family:"Liberation Mono","Noto Sans CJK SC",monospace}
.fx{display:flex;width:96px;height:24px;padding:0 9px 0 45px;align-items:center;justify-content:space-between}
.fx span{font:italic 18px/20px "Liberation Serif",serif;color:#a9adb7}
.formula{flex:1;height:24px;border:1px solid #d9dce1;background:#fff;border-radius:2px}
`, `<label class="name"><input type="text" value="十字星 1" aria-label="名称框">${ic('caret')}</label>
<div class="fx"><button>${ic('zoomout')}</button><span>fx</span></div><input class="formula" type="text" aria-label="编辑栏">`);

/* ---------- worksheet ---------- */
const HEAD = ['城市','一月','二月','三月','四月','五月'];
const DATA = [['A',35,76,36,84,86],['B',53,75,74,36,35],['C',64,75,47,37,88],['D',64,44,86,35,96],['E',76,74,63,52,64]];
function sheetRows() {
  let out = '';
  for (let r = 1; r <= 44; r++) {
    let cells = '';
    const vals = r === 2 ? HEAD : DATA[r - 3];
    let from = 0;
    if (r === 1) { cells = '<td colspan="6" class="title">城市<span>XXX</span>统计情况</td>'; from = 6; }
    for (let c = from; c < 22; c++) cells += vals && c < 6 ? `<td class="d">${vals[c]}</td>` : '<td></td>';
    out += `<tr${r === 1 ? ' class="first"' : ''}><th scope="row">${r}</th>${cells}</tr>`;
  }
  return out;
}
define('wps-worksheet', `
:host{display:block;position:relative;overflow:hidden;flex:1;min-height:0;min-width:0}
table{border-collapse:separate;border-spacing:0;table-layout:fixed;width:1618px;background:#cce8cf}
th,td{padding:0;overflow:hidden;white-space:nowrap;text-align:center}
th{font-weight:400;font-size:15px;line-height:16px;color:#20242e;background:#f5f6f9}
tr{height:18px}
td{border-right:1px solid #b9c7d6;border-bottom:1px solid #b9c7d6;color:#000}
thead tr{height:22px}
thead th{border-bottom:1px solid #9fb0ac;background:linear-gradient(#f5f6f900,#aab0be) right/1px 100% no-repeat #f5f6f9}
tbody th{border-right:1px solid #9fb0be;background:linear-gradient(90deg,#f5f6f900,#b4bac6) bottom/100% 1px no-repeat #f5f6f9}
.first{height:27px}
td.title{padding-top:4px;font:700 22px/20px "Liberation Serif","Noto Sans CJK SC",serif;border-bottom-color:#000}
.title span{font-size:17px;line-height:0}
td.d{border-color:#000;padding-top:2px;font:15px/14px "Liberation Serif","Noto Sans CJK SC",serif}
tr:nth-child(2) td.d{padding-top:0;font-size:14px}
.corner svg{display:block;margin:6px 0 0 18px}
`, `<table><colgroup><col style="width:34px">${'<col style="width:72px">'.repeat(22)}</colgroup>
<thead><tr><th class="corner"><svg width="11" height="11"><path d="M11 0v11H0z" fill="#b5b8bf"/></svg></th>${[...'ABCDEFGHIJKLMNOPQRSTUV'].map(c => `<th scope="col">${c}</th>`).join('')}</tr></thead>
<tbody>${sheetRows()}</tbody></table><slot></slot>`);

define('wps-star', `
:host{position:absolute;left:688px;top:160px;width:308px;height:300px}
svg{display:block;overflow:visible}
.tools{position:absolute;left:281px;top:36px;display:flex;flex-direction:column;gap:12px;align-items:center}
.tools button{width:27px;height:27px;background:#fff;box-shadow:1px 1px 3px #0005;justify-content:center}
.tools .m{width:17px;height:17px;border-radius:9px;background:#f7f8f9;margin-bottom:-3px}
`, `<svg width="270" height="296" fill="none">
<path d="M0 36.500h264.500v253H0" stroke="#e6eef0"/>
<path d="M132.500 37L155 140l109 23-109 22-22.500 104L109 185 0 163l109-23z" fill="#5b9bd5" stroke="#41719c"/>
<path d="M132.500 20v12" stroke="#333"/><circle cx="132.500" cy="11.500" r="9.500" fill="#46544a"/><path d="M136 14.500a4.300 4.300 0 1 1 .5-4" stroke="#fff" stroke-width="2.200"/><path d="M133.500 11h7l-3.500 4z" fill="#fff"/>
<path d="M132 124.500l6.500 6.500-6.500 6.500-6.500-6.500z" fill="#ffff8c" stroke="#555"/>
<g fill="#fff" stroke="#555e58"><circle cx="132.500" cy="37.500" r="5.500"/><circle cx="264.500" cy="37.500" r="5.500"/><circle cx="264.500" cy="163.500" r="5.500"/><circle cx="264.500" cy="289.500" r="5.500"/><circle cx="132.500" cy="289.500" r="5.500"/></g></svg>
<div class="tools"><button class="m"><svg width="9" height="3"><path d="M0 1.500h9" stroke="#777d88" stroke-width="2"/></svg></button>${['paint','bucket2','outline2','idea'].map(n => `<button>${ic(n)}</button>`).join('')}</div>`);

define('wps-vscroll', `
:host{display:flex;flex-direction:column;align-items:center;width:17px;padding-left:4px}
.split{width:11px;height:3px;border:solid #9a9fab;border-width:1px 0;margin:6px 0 5px}
.track{flex:1;width:13px;background:#e9ebef;display:flex;flex-direction:column;align-items:center;padding:8px 0;gap:9px}
.thumb{width:12px;flex:1;background:#d2d5db;border-radius:6px;margin-bottom:25px}
`, `<span class="split"></span><div class="track">${ic('caretup')}<span class="thumb"></span>${ic('caret')}</div>`);

define('wps-sheet-tabs', `
:host{display:flex;height:22px;align-items:center;border-top:1px solid #dde0e5;padding-left:16px}
.nav{display:flex;gap:17px;width:104px}
.tab{width:72px;height:21px;padding-left:16px;background:#fff;color:#19b070;font-weight:700;box-shadow:0 1px 2px #0002}
.add{width:24px;justify-content:center}
.scroll{display:flex;align-items:center;width:669px;gap:6px;padding-right:22px}
.split{width:4px;height:10px;border:solid #9a9fab;border-width:0 1px}
.track{flex:1;height:14px;background:#eceef1;display:flex;align-items:center;gap:10px;padding:0 8px}
.thumb{flex:1;height:12px;border-radius:6px;background:#d2d5db;margin-right:32px}
`, `<div class="nav">${['first','prev','next','last'].map(n => `<button>${ic(n)}</button>`).join('')}</div><button class="tab">Sheet1</button><button class="add">${ic('plusthin')}</button><span class="grow"></span>
<div class="scroll"><span class="split"></span><div class="track">${ic('caretleft')}<span class="thumb"></span>${ic('caretright')}</div><span class="split"></span></div>`);

/* ---------- selection pane ---------- */
define('wps-pane', `
:host{display:flex;flex-direction:column;width:262px;border:solid #dde0e5;border-width:0 1px;padding:0 12px 25px}
header{display:flex;align-items:center;gap:6px;height:31px;margin-left:-3px;color:#535c74}
header .x{margin:0 -4px 0 6px}
h3{margin:6px 0;font-size:14px;line-height:20px;font-weight:400;color:#535c74}
.list{flex:1;background:#fff;border:1px solid #dde0e5;padding:2px;width:236px}
.it{display:flex;align-items:center;justify-content:space-between;width:220px;height:24px;border:1px solid #2fa583;padding-left:2px;color:#20242e}
.it button{width:20px;height:20px;border:1px solid #dde0e5;justify-content:center}
.order{display:flex;align-items:center;gap:10px;margin:7px 0}
.order button{width:23px;height:23px;border:1px solid #dde0e5;justify-content:center}
.all{display:flex;gap:10px}
.all button{height:24px;padding:0 7px;background:#fff;border:1px solid #cfd3d9}
`, `<header>选择窗格${ic('caret')}<span class="grow"></span><button>${ic('pin')}</button><button class="x">${ic('close')}</button></header>
<h3>文档中的对象</h3><div class="list"><div class="it">十字星 1<button>${ic('eye')}</button></div></div>
<div class="order">叠放次序<button>${ic('up')}</button><button>${ic('down')}</button></div><div class="all"><button>全部显示</button><button>全部隐藏</button></div>`);

define('wps-rail', `
:host{display:flex;flex-direction:column;align-items:center;width:43px;padding-top:11px}
.h{width:20px;height:5px;border:solid #cdd0d6;border-width:1px 0;margin-bottom:12px}
button{width:32px;height:32px;justify-content:center;margin-bottom:4px;border-radius:2px}
button.on{background:#d8dce3}
hr{width:38px;margin:0 0 16px;border:0;border-top:1px solid #dde0e5}
.more{height:26px}
`, `<span class="h"></span>${['rocket','arrow','sliders','frames','docerlib','bulb','book'].map(n => `<button${n === 'arrow' ? ' class="on"' : ''}>${ic(n)}</button>`).join('')}<span class="grow"></span><hr><span class="more">•••</span>`);

/* ---------- status bar ---------- */
define('wps-statusbar', `
:host{display:flex;align-items:center;height:28px;border-top:1px solid #dde0e5;padding-left:15px}
.sep{height:14px}
button.b{width:23px;height:24px;justify-content:center}
button.on{background:#dcdfe5}
.left{width:32px}
.views{display:flex;align-items:center;gap:4px;margin:0 10px}
.see{display:flex;align-items:center;gap:4px;margin-right:10px}
.see button{gap:5px}
.zoom{gap:8px;margin:0 7px 0 10px}
.slide{gap:12px}
input{appearance:none;width:150px;height:14px;background:linear-gradient(#5a6276,#5a6276) center/100% 1px no-repeat;margin:0 53px 0 12px}
input::-webkit-slider-thumb{appearance:none;width:6px;height:12px;background:#5a6276}
`, `<button class="left">${ic('script')}</button><span class="sep"></span><span class="grow"></span>
<div class="see"><button class="b on">${ic('eyeon')}</button><button>${ic('cross')}${ic('caret')}</button></div><span class="sep"></span>
<div class="views"><button class="b on">${ic('table')}</button><button class="b">${ic('page')}</button><button class="b">${ic('split')}</button></div><span class="sep"></span>
<button class="zoom">100%${ic('caret')}</button><button>${ic('minus')}</button><input type="range" aria-label="缩放" value="50">`);

/* ---------- floating things ---------- */
define('wps-ime', `
:host{position:absolute;right:0;bottom:0;width:171px;height:28px;z-index:6;display:flex;align-items:center;justify-content:space-between;background:#fff;border:1px solid #c3c6cc;padding:0 8px 0 4px;color:#3f63f0}
.c{width:22px;height:22px;flex:none;border:2px solid #3f63f0;border-radius:50%;font-size:8px;font-weight:700;display:flex;align-items:center;justify-content:center}
b{font-size:15px;line-height:20px}
`, `<span class="c">iFLY</span><b>中</b><b>•,</b>${ic('mic')}${ic('person')}${ic('apps')}`);
define('wps-watermark', `
:host{position:absolute;right:11px;bottom:6px;z-index:7;display:flex;align-items:flex-end;opacity:.7;pointer-events:none}
.t{display:flex;flex-direction:column;align-items:flex-start;margin-left:-6px}
.t b{font-size:21px;line-height:26px;color:#6fa8d8;font-weight:500}
.t i{font:700 15px/20px "Liberation Sans",sans-serif;color:#6cc24a}
`, `<svg width="50" height="44" fill="none"><path d="M1 34Q5 6 44 2 20 8 15 26q-2 6 2 8Q6 40 1 34z" fill="#4b9fd6"/><path d="M12 38Q34 36 38 24q2-6-4-8 14 0 10 12Q36 46 12 38z" fill="#62b84e"/><path d="M16 20q8-8 18-4-12 0-12 6t10 4q-12 8-16-6z" fill="#88bce0"/></svg><div class="t"><b>极光下载站</b><i>www.xz7.com</i></div>`);
define('wps-meter', `
:host{position:absolute;right:0;top:854px;width:10px;height:59px;z-index:5;background:#454a5a;border:1px solid #2c3040;border-right:0;border-radius:3px 0 0 3px;padding:6px 0 6px 3px}
i{display:block;width:5px;height:100%;background:repeating-linear-gradient(transparent 0 1px,#454a5a 1px 2px),linear-gradient(#333a68 25%,#d8d452 27%,#b8c850 55%,#4cc8a0 75%)}
`, `<i></i>`);
define('wps-marks', `
:host{position:absolute;inset:0;z-index:8;pointer-events:none}
svg{position:absolute;left:0;top:0;filter:drop-shadow(2px 2px 1px #0005)}
span{position:absolute;width:24px;height:24px;border-radius:50%;background:#1010f0;border:3px solid #fff;box-shadow:1px 2px 4px #0008;color:#fff;font-size:14px;line-height:18px;text-align:center}
`, `<svg width="1100" height="480" fill="#f01010" stroke="#f01010" stroke-width="3">
<path d="M1018 147L957 76"/><path d="M948 65l24 13-9 3-4 9z" stroke="none"/>
<path d="M455 170l65-49"/><path d="M531 113l-14 24-2-11-10-5z" stroke="none"/>
<path d="M451 449l95-94"/><path d="M557 344l-11 26-4-11-10-4z" stroke="none"/></svg>
<span style="left:943px;top:96px">1</span><span style="left:501px;top:145px">2</span><span style="left:502px;top:330px">3</span>`);

define('wps-app', `
:host{display:flex;flex-direction:column;height:100vh;position:relative;overflow:hidden}
main{display:flex;flex:1;min-height:0}
.work{flex:1;min-width:0;display:flex;flex-direction:column}
.sheet{display:flex;flex:1;min-height:0}
`, `<wps-titlebar></wps-titlebar><wps-menubar></wps-menubar><wps-ribbon></wps-ribbon>
<main><div class="work"><wps-formula-bar></wps-formula-bar><div class="sheet"><wps-worksheet><wps-star></wps-star></wps-worksheet><wps-vscroll></wps-vscroll></div><wps-sheet-tabs></wps-sheet-tabs></div><wps-pane></wps-pane><wps-rail></wps-rail></main>
<wps-statusbar></wps-statusbar><wps-meter></wps-meter><wps-ime></wps-ime><wps-watermark></wps-watermark><wps-marks></wps-marks>`);
</script>
</body>
</html>
